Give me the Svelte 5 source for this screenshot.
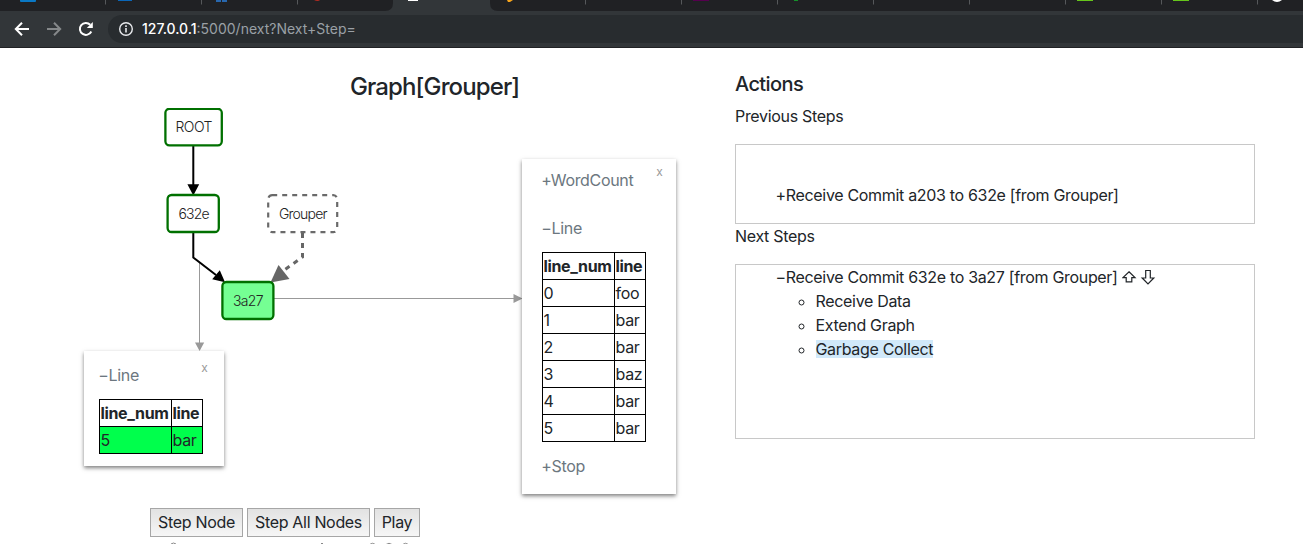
<script>
  const dividers = [105, 201, 297, 585, 681, 777, 873, 969, 1065, 1161, 1257];
  const words = ['foo', 'bar', 'bar', 'baz', 'bar', 'bar'];
</script>

<header class="browser">
  <svg class="tabs" width="1303" height="11" viewBox="0 0 1303 11">
    <path d="M385 11Q393 11 393 3V0H490V3Q490 11 498 11Z" fill="#323639" />
    {#each dividers as x}
      <path d={`M${x + 0.5} 0V4.5`} stroke="#56585b" />
    {/each}
    <path d="M20 0H36V1Q36 2 35 2H21Q20 2 20 1Z" fill="#0a78c4" />
    <path d="M118 0H132V1H118Z" fill="#0a66b8" />
    <path d="M216 0H221V2H216ZM222 0H227V2H222Z" fill="#2867ae" />
    <path d="M314 0H320Q318 2 314 0Z" fill="#b32b22" />
    <path d="M408 0H418V1H408Z" fill="#fff" />
    <path d="M507 0H513L510 2H508Z" fill="#f8a51b" />
    <path d="M693 0H709V1H693Z" fill="#55004e" />
    <path d="M794 0H798V1H794Z" fill="#15912a" />
    <path d="M1077 0H1093V1H1077ZM1173 0H1189V1H1173Z" fill="#66c51b" />
    <path d="M1272 0H1282Q1277 4 1272 0Z" fill="#fff" />
  </svg>
  <div class="toolbar">
    <svg width="108" height="36" viewBox="0 11 108 36" fill="none" stroke-width="2">
      <path d="M29 29H16.5M22 22.7L15.8 29L22 35.3" stroke="#fff" />
      <path d="M47 29H59.5M54 22.7L60.2 29L54 35.3" stroke="#85888a" />
      <path d="M91.3 31.500A6 6 0 1 1 90.2 24.7" stroke="#fff" />
      <path d="M92.8 22V28H86.8Z" fill="#fff" />
    </svg>
    <div class="address">
      <svg width="16" height="16" viewBox="0 0 16 16" fill="none">
        <circle cx="8" cy="8" r="6.3" stroke="#e8eaed" stroke-width="1.4" />
        <path d="M8 7V11.5M8 4.3V5.9" stroke="#e8eaed" stroke-width="1.6" />
      </svg>
      <span class="url"><b>127.0.0.1</b>:5000/next?Next+Step=</span>
    </div>
  </div>
</header>

<main>
  <section class="graph">
    <h1>Graph[Grouper]</h1>
    <div class="canvas">
      <svg class="edges" width="735" height="400" viewBox="0 108 735 400">
        <g fill="none" stroke="#999">
          <path d="M199.5 263V344" />
          <path d="M274 298.5H515" />
        </g>
        <path d="M195 342.5H204.2L199.6 351ZM513.5 294V303L522.5 298.5Z" fill="#999" />
        <path d="M193.3 146V187M193.3 233V257.5L216 275" fill="none" stroke="#000" stroke-width="2" />
        <path d="M187.4 184.3H199.2L193.3 195.5ZM225 282.3L212.2 279.3L219.8 270.2Z" fill="#000" />
        <path d="M302.5 233V257L283 271" fill="none" stroke="#666" stroke-width="3" stroke-dasharray="5 5" />
        <path d="M270.5 282.5L278.5 265L289.5 279Z" fill="#666" />
        <g stroke="#007000" stroke-width="2.3" fill="#fff">
          <rect x="165.4" y="108.8" width="56.4" height="36.5" rx="4" />
          <rect x="167.6" y="195" width="51.2" height="37" rx="4" />
          <rect x="222.4" y="282" width="51" height="37" rx="4" fill="#75ff93" />
        </g>
        <rect x="268.2" y="195.2" width="69" height="37" rx="4" fill="#fff" stroke="#6a6a6a" stroke-width="2.2" stroke-dasharray="5 5" />
        <g class="labels">
          <text x="175.500" y="132" textLength="37">ROOT</text>
          <text x="178.500" y="219" textLength="31">632e</text>
          <text x="279" y="219" textLength="48.500">Grouper</text>
          <text x="233" y="306" textLength="30.500">3a27</text>
        </g>
      </svg>

      <article class="card small">
        <span class="close">x</span>
        <p>−Line</p>
        <table>
          <tbody>
            <tr><th>line_num</th><th>line</th></tr>
            <tr class="added"><td>5</td><td>bar</td></tr>
          </tbody>
        </table>
      </article>

      <article class="card large">
        <span class="close">x</span>
        <p>+WordCount</p>
        <p class="second">−Line</p>
        <table>
          <tbody>
            <tr><th>line_num</th><th>line</th></tr>
            {#each words as word, i}
              <tr><td>{i}</td><td>{word}</td></tr>
            {/each}
          </tbody>
        </table>
        <p class="last">+Stop</p>
      </article>
    </div>
    <div class="controls">
      <button style:width="93px">Step Node</button>
      <button style:width="123px">Step All Nodes</button>
      <button style:width="46px">Play</button>
    </div>
    <svg class="peek" width="735" height="3" viewBox="0 541 735 3" fill="none" stroke="#888">
      <path d="M171 544Q173.500 542 176 544M321 543.500H323M369.500 544.500Q372.500 542 375.500 544.500M386 544.500Q389 542 392 544.500M402.500 544.500Q405.500 542 408.500 544.500" />
    </svg>
  </section>

  <section class="actions">
    <h2>Actions</h2>
    <p>Previous Steps</p>
    <div class="box previous">+Receive Commit a203 to 632e [from Grouper]</div>
    <p>Next Steps</p>
    <div class="box next">
      <div class="step">
        <span>−Receive Commit 632e to 3a27 [from Grouper]</span>
        <svg width="34" height="16" viewBox="0 0 34 16" fill="none" stroke="#212529" stroke-width="1.2">
          <path d="M7 2.800L13 8.600H9.800V12.900H4.200V8.600H1Z" />
          <path d="M23.700 1.500H28.300V9H31.800L26 14.800L20.200 9H23.700Z" />
        </svg>
      </div>
      <ul>
        <li>Receive Data</li>
        <li>Extend Graph</li>
        <li><mark>Garbage Collect</mark></li>
      </ul>
    </div>
  </section>
</main>

<style>
  :global(body) { overflow: hidden; background: #fff; }
  .browser, main { font-family: Inter, "Liberation Sans", sans-serif; }
  .browser { height: 48px; box-sizing: border-box; background: #202124; overflow: hidden; }
  .tabs { display: block; }
  .toolbar { display: flex; height: 36px; background: #323639; }
  .address { display: flex; flex: 1; align-items: center; gap: 8px; height: 28px; margin-top: 4px; padding-left: 10px; border-radius: 14px 0 0 14px; background: #282c2f; box-sizing: border-box; }
  .url { padding-bottom: 1px; color: #9aa0a6; font-size: 14px; letter-spacing: 0; white-space: nowrap; }
  .url b { color: #fff; font-weight: 500; }
  main { display: flex; height: 496px; color: #212529; font-size: 16px; line-height: 24px; letter-spacing: -0.32px; overflow: hidden; }
  .graph { display: flex; flex-direction: column; width: 735px; flex: none; }
  h1, h2, p { margin: 0; font-weight: 500; }
  h1 { height: 60px; padding: 24px 0 0 350px; box-sizing: border-box; font-size: 24px; line-height: 29px; letter-spacing: -0.88px; }
  .canvas { position: relative; height: 400px; }
  .edges { display: block; }
  .labels { font-family: Inter, sans-serif; font-size: 14px; font-weight: 300; letter-spacing: 0; fill: #222; }
  .card { position: absolute; box-sizing: border-box; background: #fff; box-shadow: 0 2px 4px rgba(0, 0, 0, 0.5); white-space: nowrap; }
  .card p { margin-left: -0.7px; color: #6c7780; font-weight: 400; }
  .small { left: 84px; top: 243px; width: 140px; height: 115px; padding: 12px 15px; }
  .large { left: 522px; top: 51px; width: 154px; height: 335px; padding: 9px 20px; }
  .second { padding-top: 24px; }
  .last { padding-top: 12px; }
  .close { position: absolute; top: 5px; right: 16.5px; color: #999; font-size: 12px; }
  .large .close { top: 1px; right: 13.5px; }
  table { width: 104px; table-layout: fixed; margin-top: 12px; border-collapse: collapse; }
  th, td { height: 24px; padding: 1px 0 1px 0.5px; border: 1px solid #000; text-align: left; }
  th:first-child, td:first-child { width: 70.5px; }
  th { font-weight: 700; letter-spacing: -0.34px; }
  .added { background: #00ff4c; }
  .controls { display: flex; gap: 4px; padding-left: 150px; }
  button { height: 29px; padding: 0 0 2px; border: 1px solid #a6a6a6; border-radius: 0; background: linear-gradient(#e2e2e2, #f6f6f6); color: #212529; font: inherit; letter-spacing: inherit; white-space: nowrap; }
  .peek { display: block; margin-top: 4px; }
  .actions { width: 520px; padding-top: 24px; }
  h2 { margin-bottom: 8px; font-size: 20px; line-height: 24px; letter-spacing: -0.6px; }
  .actions p { margin-bottom: 16px; font-weight: 400; }
  .box { box-sizing: border-box; border: 1px solid #c8c8c8; }
  .previous { height: 80px; padding: 38px 0 0 39.5px; }
  .next { height: 175px; padding-left: 39.5px; }
  .step { display: flex; align-items: center; gap: 4px; }
  ul { margin: 0; padding-left: 40px; list-style: circle; }
  mark { background: #d1e9fa; color: inherit; display: inline-block; height: 18px; line-height: 18px; }
</style>
